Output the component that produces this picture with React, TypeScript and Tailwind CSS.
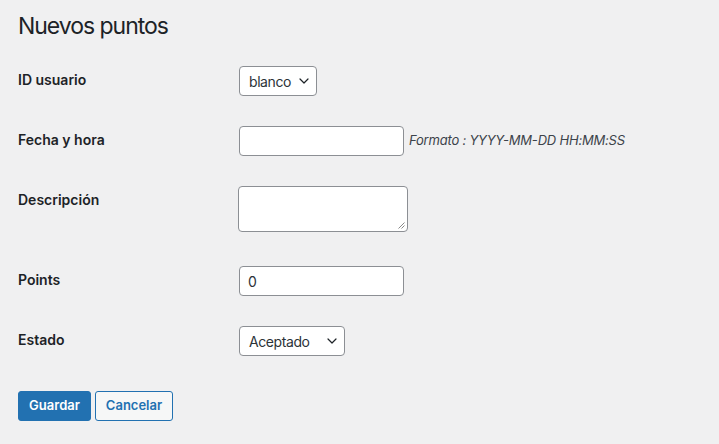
import React from 'react';

const Chevron: React.FC = () => (
    <svg width="10" height="6" viewBox="0 0 10 6" fill="none" className="shrink-0">
        <path d="M1 1l4 4 4-4" stroke="#1d2327" strokeWidth="1.2" strokeLinecap="round" strokeLinejoin="round" />
    </svg>
);

const Row: React.FC<{ label: string; children: React.ReactNode }> = ({ label, children }) => (
    <div className="flex">
        <div className="w-[221px] shrink-0 pt-[20px] text-[14px] font-semibold leading-[18px] text-[#1d2327]">{label}</div>
        <div className="py-[15px] flex items-start">{children}</div>
    </div>
);

const Select: React.FC<{ value: string; width: string }> = ({ value, width }) => (
    <div className={`${width} h-[30px] flex items-center justify-between pl-[9px] pr-[7px] bg-white border border-[#8c8f94] rounded-[4px] text-[14px] tracking-[-0.03em] text-[#2c3338]`}>
        <span>{value}</span>
        <Chevron />
    </div>
);

export default function App() {
    return (
        <div className="min-h-[444px] w-full bg-[#f0f0f1] pl-[18px] pt-[11px]" style={{ fontFamily: 'Inter, "Noto Sans", sans-serif' }}>
            <h1 className="text-[23px] font-normal leading-[30px] tracking-[-0.045em] text-[#1d2327] mb-[10px]">Nuevos puntos</h1>

            <Row label="ID usuario">
                <Select value="blanco" width="w-[78px]" />
            </Row>

            <Row label="Fecha y hora">
                <div className="flex items-center">
                    <div className="w-[165px] h-[30px] bg-white border border-[#8c8f94] rounded-[4px]" />
                    <span className="ml-[5px] text-[13px] italic tracking-[-0.015em] text-[#3c434a]">Formato : YYYY-MM-DD HH:MM:SS</span>
                </div>
            </Row>

            <Row label="Descripción">
                <div className="-ml-px pb-[4px]">
                    <div className="relative w-[170px] h-[46px] bg-white border border-[#8c8f94] rounded-[4px]">
                        <svg width="7" height="7" viewBox="0 0 7 7" className="absolute right-[2px] bottom-[2px]">
                            <path d="M6.5 0.5L0.5 6.5M6.5 3.5L3.5 6.5" stroke="#6b6b6b" strokeWidth="0.8" />
                        </svg>
                    </div>
                </div>
            </Row>

            <Row label="Points">
                <div className="w-[165px] h-[30px] flex items-center pl-[8px] bg-white border border-[#8c8f94] rounded-[4px] text-[14px] text-[#2c3338]">0</div>
            </Row>

            <Row label="Estado">
                <Select value="Aceptado" width="w-[106px]" />
            </Row>

            <div className="mt-[20px] flex gap-[4px]">
                <button className="w-[73px] h-[30px] rounded-[3px] bg-[#2271b1] border border-[#2271b1] text-white text-[13px] font-semibold">Guardar</button>
                <button className="w-[78px] h-[30px] rounded-[3px] bg-[#f6f7f7] border border-[#2271b1] text-[#2271b1] text-[13px] font-semibold">Cancelar</button>
            </div>
        </div>
    );
}
